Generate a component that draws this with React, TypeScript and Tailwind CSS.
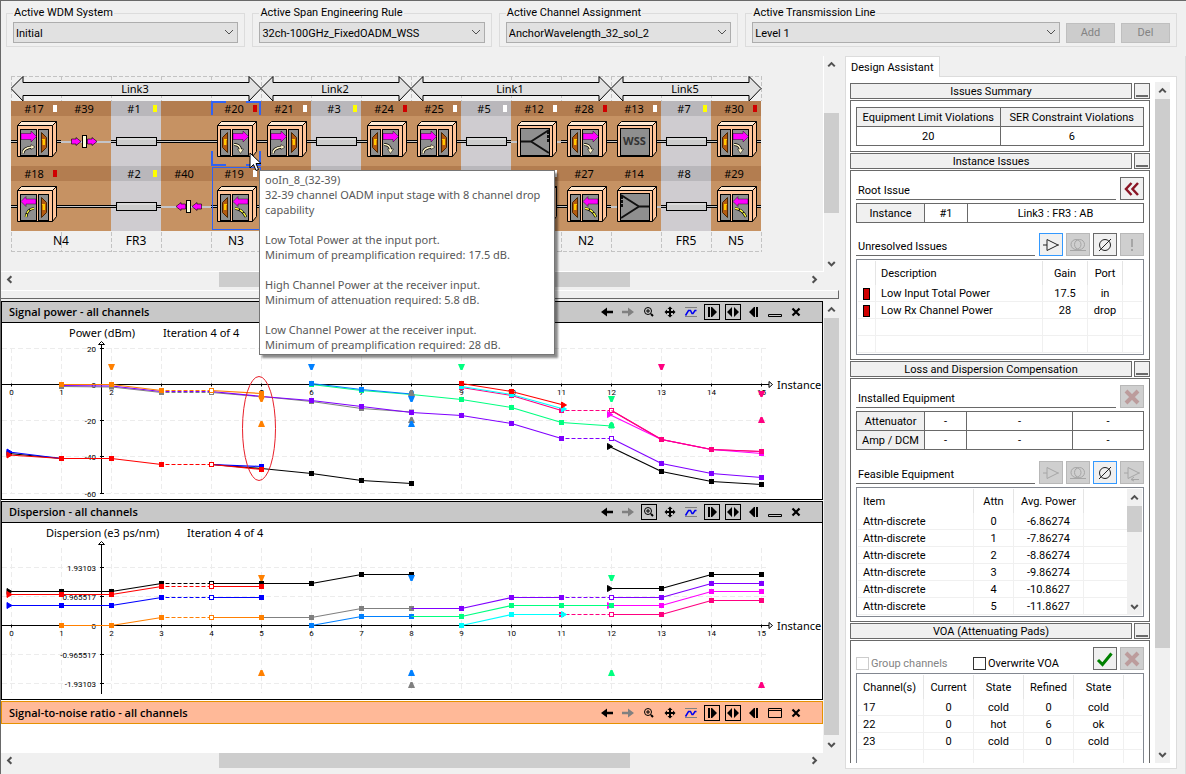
import { FC, ReactNode } from 'react';

type Tone = 'brown' | 'gray';
type DeviceKind = 'out' | 'in' | 'fiber' | 'coupler' | 'wss' | 'joint' | 'wire';

interface Cell {
  label?: string;
  flag?: string;
  kind: DeviceKind;
}

const WHITE = '#ffffff';
const RED = '#d00000';
const YELLOW = '#ffff00';
const COL = 50;

const tones: Tone[] = [
  'brown', 'brown', 'gray', 'brown', 'brown', 'brown', 'gray', 'brown',
  'brown', 'gray', 'brown', 'brown', 'brown', 'gray', 'brown',
];

const topRow: Cell[] = [
  { label: '#17', flag: WHITE, kind: 'out' },
  { label: '#39', kind: 'joint' },
  { label: '#1', flag: YELLOW, kind: 'fiber' },
  { kind: 'wire' },
  { label: '#20', flag: RED, kind: 'in' },
  { label: '#21', flag: WHITE, kind: 'out' },
  { label: '#3', flag: YELLOW, kind: 'fiber' },
  { label: '#24', flag: RED, kind: 'in' },
  { label: '#25', flag: WHITE, kind: 'out' },
  { label: '#5', flag: WHITE, kind: 'fiber' },
  { label: '#12', flag: WHITE, kind: 'coupler' },
  { label: '#28', flag: RED, kind: 'in' },
  { label: '#13', flag: WHITE, kind: 'wss' },
  { label: '#7', flag: YELLOW, kind: 'fiber' },
  { label: '#30', flag: RED, kind: 'in' },
];

const bottomRow: Cell[] = [
  { label: '#18', flag: RED, kind: 'out' },
  { kind: 'wire' },
  { label: '#2', flag: YELLOW, kind: 'fiber' },
  { label: '#40', kind: 'joint' },
  { label: '#19', flag: WHITE, kind: 'in' },
  { kind: 'out' },
  { kind: 'fiber' },
  { kind: 'in' },
  { kind: 'out' },
  { kind: 'fiber' },
  { flag: WHITE, kind: 'out' },
  { label: '#27', kind: 'in' },
  { label: '#14', kind: 'coupler' },
  { label: '#8', kind: 'fiber' },
  { label: '#29', kind: 'in' },
];

const links = [
  { name: 'Link3', from: 0, to: 5 },
  { name: 'Link2', from: 5, to: 8 },
  { name: 'Link1', from: 8, to: 12 },
  { name: 'Link5', from: 12, to: 15 },
];

const sites = [
  { name: 'N4', at: 50 },
  { name: 'FR3', at: 125 },
  { name: 'N3', at: 225 },
  { name: 'N2', at: 575 },
  { name: 'FR5', at: 675 },
  { name: 'N5', at: 725 },
];

const Wire: FC<{ x1: number; x2: number; light?: boolean }> = ({ x1, x2, light }): ReactNode => (
  <g shapeRendering="crispEdges">
    {light ? (
      <rect x={x1} y="40" width={x2 - x1} height="2" fill="#c4c4c8" />
    ) : (
      <>
        <rect x={x1} y="39" width={x2 - x1} height="3" fill="#000" />
        <rect x={x1} y="40" width={x2 - x1} height="1" fill="#c8c8c8" />
      </>
    )}
  </g>
);

const Cabinet: FC = (): ReactNode => (
  <g stroke="#000" strokeLinejoin="round">
    <path d="M6.500 24.500L10.500 20.500H45.500L41.500 24.500Z" fill="#ffe9d2" />
    <path d="M41.500 24.500L45.500 20.500V50.500L41.500 55.500Z" fill="#ffc499" />
    <rect x="6.500" y="24.500" width="35" height="31" fill="#ffc499" />
  </g>
);

const Door: FC<{ x: number; flip?: boolean }> = ({ x, flip }): ReactNode => (
  <g transform={flip ? `translate(${x + 11} 0) scale(-1 1)` : `translate(${x} 0)`}>
    <rect x="0.500" y="28.500" width="10" height="26" fill="#8f8f8f" stroke="#000" />
    <path d="M3.500 31.500L8.500 36.500V46.500L3.500 51.500Z" fill="#b35a10" stroke="#4a2400" />
    <rect x="4" y="38" width="3" height="6" fill="#ffc800" />
    <path d="M4.500 39V44" stroke="#e08000" />
  </g>
);

const Chamber: FC<{ x: number; left?: boolean; down?: boolean }> = ({ x, left, down }): ReactNode => (
  <g transform={`translate(${x} 0)`}>
    <rect x="0.500" y="28.500" width="16" height="26" fill="#8f8f8f" stroke="#000" />
    <path
      d={
        left
          ? 'M1 35.500L6 30.500V33H16V38H6V40.500Z'
          : 'M1 32.500H11V30L16.500 35.500L11 41V38.500H1Z'
      }
      fill="#ff00ff"
      stroke="#000"
      strokeWidth="0.4"
    />
    {left ? (
      <g fill="none">
        <path d={down ? 'M3 42.500Q10 43 14 51' : 'M14 42.500Q7 43 6 51'} stroke="#000" strokeWidth="2.6" />
        <path
          d={down ? 'M3 42.500Q10 43 14 51' : 'M14 42.500Q7 43 6 51'}
          stroke="#ffff40"
          strokeWidth="1.4"
          strokeDasharray="4 1"
        />
      </g>
    ) : (
      <g fill="none">
        <path d={down ? 'M2 43.500Q8 43.500 8.500 49' : 'M3 52.500Q3 47 12 46'} stroke="#000" strokeWidth="2.800" />
        <path d={down ? 'M5.500 48L8.500 52.500L11.500 48Z' : 'M11 43.500L15 46L11 48.500Z'} fill="#fff6c8" stroke="#000" strokeWidth="0.5" />
        <path d={down ? 'M2 43.500Q8 43.500 8.500 49' : 'M3 52.500Q3 47 12 46'} stroke="#fff6c8" strokeWidth="1.5" />
      </g>
    )}
  </g>
);

const Device: FC<{ kind: DeviceKind; reverse: boolean }> = ({ kind, reverse }): ReactNode => {
  if (kind === 'wire') return <Wire x1={0} x2={50} />;
  if (kind === 'fiber') {
    return (
      <>
        <Wire x1={0} x2={50} />
        <rect x="5.500" y="36.500" width="40" height="8" fill="#cccccc" stroke="#000" />
        <path d="M7 38H45" stroke="#e8e8e8" />
      </>
    );
  }
  if (kind === 'joint') {
    return (
      <>
        <Wire x1={0} x2={50} light />
        <g transform={reverse ? 'translate(52 0) scale(-1 1)' : 'translate(-1 0)'} stroke="#000" strokeWidth="0.600">
          <path d="M11.500 38H16V36.500L21 40.500L16 44.500V43H11.500Z" fill="#ff00ff" />
          <path d="M27.500 38H32V36.500L37 40.500L32 44.500V43H27.500Z" fill="#ff00ff" />
          <rect x="22.500" y="34.500" width="4" height="12" fill="#ffffe0" strokeWidth="1" />
        </g>
      </>
    );
  }
  if (kind === 'coupler' || kind === 'wss') {
    return (
      <>
        <Wire x1={0} x2={50} light={kind === 'coupler'} />
        <Cabinet />
        <rect x="9.500" y="27.500" width="29" height="27" fill="#8f8f8f" stroke="#000" />
        {kind === 'wss' ? (
          <text x="23.500" y="44" textAnchor="middle" fontSize="11" fontWeight="700" fill="#333">
            WSS
          </text>
        ) : (
          <g transform={reverse ? 'translate(48 0) scale(-1 1)' : undefined}>
            <path d="M10 40.500H20M20 40.500L38 29M20 40.500L38 52" stroke="#111" strokeWidth="2" fill="none" />
            <path d="M37 30V42" stroke="#111" strokeWidth="2" strokeDasharray="3 1" />
          </g>
        )}
      </>
    );
  }
  return (
    <>
      <Wire x1={0} x2={50} />
      <Cabinet />
      {kind === 'out' ? (
        <>
          <Chamber x={9} left={reverse} />
          <Door x={27} />
        </>
      ) : (
        <>
          <Door x={9} flip />
          <Chamber x={21} left={reverse} down />
        </>
      )}
    </>
  );
};

const NetworkRow: FC<{ cells: Cell[]; y: number; reverse: boolean }> = ({ cells, y, reverse }): ReactNode => (
  <g transform={`translate(0 ${y})`}>
    {cells.map((cell, i) => (
      <g key={i} transform={`translate(${i * COL} 0)`}>
        <rect width="50" height="15" fill={tones[i] === 'brown' ? '#b37d50' : '#b9b7bb'} />
        <rect y="15" width="50" height="50" fill={tones[i] === 'brown' ? '#c69263' : '#cfccd0'} />
        {cell.label && (
          <text x="23" y="12" textAnchor="middle" fontSize="11">
            {cell.label}
          </text>
        )}
        {cell.flag && <rect x="42" y="4" width="4" height="7" fill={cell.flag} />}
      </g>
    ))}
    {cells.map((cell, i) => (
      <g key={i} transform={`translate(${i * COL} 0)`}>
        <Device kind={cell.kind} reverse={reverse} />
      </g>
    ))}
  </g>
);

const NetworkDiagram: FC = (): ReactNode => (
  <svg width="752" height="178" className="shrink-0 font-['Noto_Sans','Segoe_UI',sans-serif]">
    <g stroke="#c3c3c3" strokeDasharray="4 2">
      <path d="M0 0.500H750M0 175.500H750" />
      {Array.from({ length: 16 }, (_, i) => (
        <path key={i} d={`M${i * COL + 0.5} 0V25M${i * COL + 0.5} 156V176`} />
      ))}
    </g>
    {links.map(({ name, from, to }) => {
      const a = from * COL;
      const b = to * COL;
      return (
        <g key={name}>
          <path
            d={`M${a} 12.500L${a + 12} 0.500V6.500H${b - 12}V0.500L${b} 12.500L${b - 12} 25V19.500H${a + 12}V25Z`}
            fill="#e1e1e1"
            stroke="#000"
          />
          <text x={(a + b) / 2 - 1} y="17" textAnchor="middle" fontSize="11">
            {name}
          </text>
        </g>
      );
    })}
    <NetworkRow cells={topRow} y={25} reverse={false} />
    <NetworkRow cells={bottomRow} y={90} reverse />
    {sites.map(({ name, at }) => (
      <text key={name} x={at} y="169" textAnchor="middle" fontSize="12">
        {name}
      </text>
    ))}
    <path
      d="M201 39V26H215M235 26H249V39M201 75V89H215M235 89H249V75"
      fill="none"
      stroke="#2f62f5"
      strokeWidth="2"
    />
    <rect x="201.500" y="91.500" width="48" height="62" fill="none" stroke="#2f62f5" />
  </svg>
);

type Point = [number, number];

interface Series {
  color: string;
  points: Point[];
  // the series begins or ends with an arrow head rather than a square
  start?: boolean;
  end?: boolean;
  noMarks?: number[];
}

interface Limit {
  color: string;
  at: Point;
  up?: boolean;
}

interface ChartProps {
  title: string;
  titleX: number;
  iterationX: number;
  zero: number;
  gridTop: number;
  ticks: { label: string; y: number }[];
  series: Series[];
  limits: Limit[];
  children?: ReactNode;
}

const BLACK = '#000000';
const PURPLE = '#8000ff';
const GRAY = '#808080';
const ORANGE = '#ff8000';
const AZURE = '#0080ff';
const GREEN = '#00ff80';
const CYAN = '#00ffff';
const PINK = '#ff0080';
const MAGENTA = '#ff00ff';

const px = (i: number): number => 9.5 + i * COL;

const ChartLine: FC<{ series: Series }> = ({ series }): ReactNode => {
  const { color, points, start, end, noMarks = [] } = series;
  return (
    <g stroke={color} fill={color}>
      {points.slice(1).map(([i, y], n) => {
        const [pi, py] = points[n];
        const skipped = (pi === 3 && i === 4) || (pi === 11 && i === 12 && color !== GREEN);
        return (
          <path
            key={i}
            d={`M${px(pi)} ${py}L${px(i)} ${y}`}
            strokeWidth="1.2"
            strokeDasharray={skipped ? '4 2' : undefined}
            strokeDashoffset={skipped ? 2 : undefined}
          />
        );
      })}
      {points.map(([i, y], n) => {
        const x = px(i);
        if (noMarks.includes(i)) return null;
        if ((n === 0 && start) || (n === points.length - 1 && end)) {
          return <path key={i} d={`M${x - 2} ${y - 3}L${x + 3} ${y}L${x - 2} ${y + 3}Z`} />;
        }
        const open = i === 4 || (i === 12 && color !== GREEN);
        return open ? (
          <rect key={i} x={x - 2} y={y - 2} width="4" height="4" fill="#fff" />
        ) : (
          <rect key={i} x={x - 2.5} y={y - 2.5} width="5" height="5" stroke="none" />
        );
      })}
    </g>
  );
};

const Chart: FC<ChartProps> = ({
  title, titleX, iterationX, zero, gridTop, ticks, series, limits, children,
}): ReactNode => (
  <svg width="820" height="176" className="block font-['Noto_Sans','Segoe_UI',sans-serif]">
    <g stroke="#ececec" strokeDasharray="5 3">
      {ticks.filter((t) => t.y !== zero).map((t) => (
        <path key={t.label} d={`M0 ${t.y}H764`} />
      ))}
      {Array.from({ length: 16 }, (_, i) => (
        <path key={i} d={`M${px(i)} ${gridTop}V170`} />
      ))}
    </g>
    <g stroke="#000" fill="none">
      <path d={`M0 ${zero}H767M99.500 21V171`} />
      <path d={`M767 ${zero - 3}V${zero + 3}L770.500 ${zero}ZM96.500 21.500H102.500L99.500 18.500Z`} fill="#fff" />
      {ticks.map((t) => (
        <path key={t.label} d={`M98 ${t.y}H102`} />
      ))}
      {Array.from({ length: 16 }, (_, i) => (
        <path key={i} d={`M${px(i)} ${zero - 1}V${zero + 2}`} />
      ))}
    </g>
    <g className="font-[Roboto,Tahoma,sans-serif]" fontSize="8">
      {Array.from({ length: 16 }, (_, i) => (
        <text key={i} x={px(i)} y={zero + 10} textAnchor="middle">
          {i}
        </text>
      ))}
      {ticks.map((t) => (
        <text key={t.label} x="94" y={t.y + 3} textAnchor="end">
          {t.label}
        </text>
      ))}
    </g>
    <g fontSize="11">
      <text x={titleX} y="14">{title}</text>
      <text x={iterationX} y="14">Iteration 4 of 4</text>
      <text x="775" y={zero + 4}>Instance</text>
    </g>
    {series.map((s, n) => (
      <ChartLine key={n} series={s} />
    ))}
    {limits.map(({ color, at: [i, y], up }, n) => (
      <path
        key={n}
        fill={color}
        d={
          up
            ? `M${px(i) - 3.5} ${y + 3}H${px(i) + 3.5}L${px(i) + 1} ${y - 3}H${px(i) - 1}Z`
            : `M${px(i) - 3.5} ${y - 3}H${px(i) + 3.5}L${px(i) + 1} ${y + 3}H${px(i) - 1}Z`
        }
      />
    ))}
    {children}
  </svg>
);

const powerTicks = [
  { label: '20', y: 25.5 },
  { label: '0', y: 61.5 },
  { label: '-20', y: 97.5 },
  { label: '-40', y: 133.5 },
  { label: '-60', y: 170.5 },
];

const powerSeries: Series[] = [
  { color: GRAY, points: [[1, 63.5], [2, 64], [3, 69.5], [4, 69.5], [5, 73.5], [6, 78.5], [7, 85.5], [8, 89]] },
  {
    color: PURPLE,
    noMarks: [1, 2, 3, 4, 5],
    points: [
      [1, 62.5], [2, 63], [3, 68.5], [4, 68.5], [5, 73.5], [6, 77.5], [7, 83.5], [8, 89.5],
      [9, 92.5], [10, 100.5], [11, 115.5], [12, 115.5], [13, 140.5], [14, 150.5], [15, 154.5],
    ],
  },
  { color: ORANGE, points: [[1, 61.5], [2, 61.5], [3, 67.5], [4, 67.5], [5, 70.5]] },
  { color: BLACK, start: true, noMarks: [1, 4, 5], points: [[-0.05, 130.5], [1, 135.5]] },
  { color: BLACK, noMarks: [4, 5], points: [[4, 141.5], [5, 145.5], [6, 150.5], [7, 157.5], [8, 160.5]] },
  { color: '#0000ff', start: true, points: [[-0.05, 129], [1, 135.5]] },
  { color: '#0000ff', points: [[4, 141.5], [5, 143.5]] },
  { color: '#ff0000', start: true, points: [[-0.05, 132], [1, 135.5], [2, 135.5], [3, 141.5], [4, 141.5], [5, 146.5]] },
  { color: GREEN, points: [[6, 61.5], [7, 67.5], [8, 71.5], [9, 76.5], [10, 84.5], [11, 99.5], [12, 103]] },
  { color: AZURE, points: [[6, 60.5], [7, 66.5], [8, 71]] },
  {
    color: PINK,
    points: [[9, 64.5], [10, 72.5], [11, 87.5], [12, 87.5], [13, 116.5], [14, 126.5], [15, 128.5]],
  },
  { color: CYAN, end: true, points: [[9, 63.5], [10, 71.5], [11.04, 86]] },
  { color: '#ff0000', end: true, points: [[9, 60.5], [10, 68.5], [11.04, 82]] },
  { color: MAGENTA, start: true, points: [[11.96, 91.5], [13, 116.5], [14, 126.5], [15, 130.5]] },
  { color: PINK, noMarks: [12], points: [[12, 87.5], [13, 116.5], [14, 126.5], [15, 128.5]] },
  { color: BLACK, start: true, points: [[11.96, 123.5], [13, 148.5], [14, 158.5], [15, 161.5]] },
];

const powerLimits: Limit[] = [
  { color: ORANGE, at: [2, 44] },
  { color: ORANGE, at: [5, 76] },
  { color: ORANGE, at: [5, 101], up: true },
  { color: AZURE, at: [6, 44] },
  { color: GRAY, at: [8, 70], up: true },
  { color: AZURE, at: [8, 76] },
  { color: GRAY, at: [8, 97], up: true },
  { color: AZURE, at: [8, 101], up: true },
  { color: GREEN, at: [9, 44] },
  { color: GREEN, at: [12, 76] },
  { color: GREEN, at: [12, 102], up: true },
  { color: PINK, at: [13, 44] },
  { color: PINK, at: [15, 71] },
  { color: PINK, at: [15, 97], up: true },
];

const dispersionTicks = [
  { label: '1.93103', y: 44.5 },
  { label: '0.965517', y: 73.5 },
  { label: '0', y: 102.5 },
  { label: '-0.965517', y: 131.5 },
  { label: '-1.93103', y: 160.5 },
];

const dispersionSeries: Series[] = [
  {
    color: BLACK,
    start: true,
    points: [
      [-0.05, 68.5], [1, 68.5], [2, 68.5], [3, 60.5], [4, 60.5], [5, 60.5], [6, 60.5], [7, 51.5], [8, 51.5],
    ],
  },
  { color: '#ff0000', start: true, points: [[-0.05, 71.5], [1, 71.5], [2, 71.5], [3, 63.5], [4, 63.5], [5, 63.5]] },
  { color: '#0000ff', start: true, points: [[-0.05, 82.5], [1, 82.5], [2, 82.5], [3, 74.5], [4, 74.5], [5, 74.5]] },
  { color: GRAY, points: [[5, 94.5], [6, 94.5], [7, 85.5], [8, 85.5]] },
  { color: ORANGE, points: [[1, 102.5], [2, 102.5], [3, 94.5], [4, 94.5], [5, 94.5]] },
  { color: AZURE, points: [[6, 102.5], [7, 93.5], [8, 93.5]] },
  {
    color: PURPLE,
    noMarks: [8],
    points: [[8, 85.5], [9, 85.5], [10, 74.5], [11, 74.5], [12, 74.5], [13, 74.5], [14, 60.5], [15, 60.5]],
  },
  { color: MAGENTA, start: true, points: [[11.96, 82.5], [13, 82.5], [14, 68.5], [15, 68.5]] },
  { color: GREEN, noMarks: [8], points: [[8, 93.5], [9, 93.5], [10, 82.5], [11, 82.5], [12, 82.5]] },
  { color: PINK, points: [[11, 91.5], [12, 91.5], [13, 91.5], [14, 77.5], [15, 77.5]] },
  { color: CYAN, end: true, points: [[9, 102.5], [10, 91.5], [11.04, 91.5]] },
  { color: BLACK, start: true, points: [[11.96, 65.5], [13, 65.5], [14, 51.5], [15, 51.5]] },
];

const dispersionLimits: Limit[] = [
  { color: ORANGE, at: [5, 55] },
  { color: ORANGE, at: [5, 150], up: true },
  { color: AZURE, at: [8, 55] },
  { color: AZURE, at: [8, 150], up: true },
  { color: GRAY, at: [8, 162], up: true },
  { color: GREEN, at: [12, 55] },
  { color: GREEN, at: [12, 150], up: true },
  { color: PINK, at: [15, 162], up: true },
];

const toolIcons: { name: string; art: ReactNode }[] = [
  { name: 'Back', art: <path d="M8 3.500L2 8L8 12.500V9.200H14V6.800H8Z" /> },
  { name: 'Forward', art: <path d="M8 3.500L14 8L8 12.500V9.200H2V6.800H8Z" fill="#808080" /> },
  {
    name: 'Zoom',
    art: (
      <>
        <circle cx="7" cy="7" r="3.500" fill="none" stroke="#000" />
        <path d="M5 7H9M7 5V9M9.500 9.500L12 12" stroke="#000" />
        <path d="M10 10L12 12" stroke="#000" strokeWidth="2" />
      </>
    ),
  },
  {
    name: 'Pan',
    art: (
      <path d="M8 2.500L10.500 5H9V7H11V5.500L13.500 8L11 10.500V9H9V11H10.500L8 13.500L5.500 11H7V9H5V10.500L2.500 8L5 5.500V7H7V5H5.500Z" />
    ),
  },
  {
    name: 'Curves',
    art: (
      <>
        <path d="M2 3.500H14M2 12.500H14" stroke="#808080" />
        <path d="M2.500 11.500L5.500 6.500H7.500L9 9.500H10L12 6.500H13.500" stroke="#0000f0" strokeWidth="1.500" fill="none" />
      </>
    ),
  },
  { name: 'Expand right', art: <path d="M4 3H6V13H4ZM7 3H8L13 8L8 13H7Z" /> },
  { name: 'Expand both', art: <path d="M7 3V13L2 8ZM9 3V13L14 8Z" /> },
  { name: 'Collapse left', art: <path d="M10 3H12V13H10ZM9 3V13H8L3 8L8 3Z" /> },
];

const ChartPanel: FC<{ title: string; zoomed?: boolean; collapsed?: boolean; children?: ReactNode }> = ({
  title, zoomed, collapsed, children,
}): ReactNode => (
  <section className={`overflow-hidden border ${collapsed ? 'border-[#e69100]' : 'border-black'} bg-white`}>
    <header
      className={`flex h-[21px] items-center justify-between pr-[18px] pl-[7px] ${
        collapsed ? 'bg-[#ffb998]' : 'border-b border-black bg-[#c8c8c8]'
      }`}
    >
      <h2 className="font-['Open_Sans','Segoe_UI',sans-serif] text-[11px] leading-4 font-semibold">{title}</h2>
      <div className="flex gap-[5px]">
        {toolIcons.map(({ name, art }) => (
          <button
            key={name}
            type="button"
            aria-label={name}
            className={`size-4 ${
              name.startsWith('Expand') || (zoomed && name === 'Zoom') ? 'outline-1 -outline-offset-1 outline-black' : ''
            }`}
          >
            <svg viewBox="0 0 16 16" className="size-4">{art}</svg>
          </button>
        ))}
        <button type="button" aria-label={collapsed ? 'Restore' : 'Minimize'} className="size-4">
          <svg viewBox="0 0 16 16" className="size-4" fill="none" stroke="#000">
            {collapsed ? <path d="M1.500 3.500H14.500V12.500H1.500ZM2 5.500H14" /> : <path d="M1.500 10.500H14.500V12.500H1.500Z" />}
          </svg>
        </button>
        <button type="button" aria-label="Close" className="size-4">
          <svg viewBox="0 0 16 16" className="size-4">
            <path d="M4.500 4.500L11.500 11.500M11.500 4.500L4.500 11.500" stroke="#000" strokeWidth="2.200" />
          </svg>
        </button>
      </div>
    </header>
    {children}
  </section>
);

const arrowPaths = {
  up: 'M4.500 10L8 6.500L11.500 10',
  down: 'M4.500 6.500L8 10L11.500 6.500',
  left: 'M10 4.500L6.500 8L10 11.500',
  right: 'M6 4.500L9.500 8L6 11.500',
};

const ScrollButton: FC<{ dir: keyof typeof arrowPaths }> = ({ dir }): ReactNode => (
  <button
    type="button"
    aria-label={`Scroll ${dir}`}
    className={`flex shrink-0 items-center justify-center ${
      dir === 'up' || dir === 'down' ? 'h-[17px] w-[15px]' : 'h-[15px] w-[17px]'
    }`}
  >
    <svg viewBox="0 0 16 16" className="size-[15px]">
      <path d={arrowPaths[dir]} fill="none" stroke="#505050" strokeWidth="2.200" />
    </svg>
  </button>
);

// before and after are the flex weights of the track on each side of the thumb
const Scrollbar: FC<{ vertical?: boolean; before: number; thumb: number; after: number }> = ({
  vertical, before, thumb, after,
}): ReactNode => (
  <div className={`flex shrink-0 bg-[#f0f0f0] ${vertical ? 'w-[15px] flex-col' : 'h-[15px]'}`}>
    <ScrollButton dir={vertical ? 'up' : 'left'} />
    <div style={{ flexGrow: before }} />
    <div className="bg-[#cdcdcd]" style={{ flexGrow: thumb }} />
    <div style={{ flexGrow: after }} />
    <ScrollButton dir={vertical ? 'down' : 'right'} />
  </div>
);

const Picker: FC<{ id: string; label: string; value: string; children?: ReactNode }> = ({
  id, label, value, children,
}): ReactNode => (
  <fieldset className="min-w-0 border border-[#dcdcdc] px-1.5 pt-0.5 pb-[3px]">
    <legend className="px-px leading-[14px]">
      <label htmlFor={id}>{label}</label>
    </legend>
    <div className="flex items-center gap-1.5">
      <div className="relative min-w-0 flex-1">
        <select
          id={id}
          className="h-[21px] w-full appearance-none border border-[#adadad] bg-[#e1e1e1] pt-px pr-5 pl-0.5"
        >
          <option>{value}</option>
        </select>
        <svg viewBox="0 0 16 16" className="pointer-events-none absolute top-0.5 right-px size-4">
          <path d="M4 6L8 10L12 6" fill="none" stroke="#505050" />
        </svg>
      </div>
      {children}
    </div>
  </fieldset>
);

const Tooltip: FC = (): ReactNode => (
  <div
    role="tooltip"
    className="absolute top-[169px] left-[258px] z-10 w-[296px] border border-[#767676] bg-white px-[5px] pt-px pb-0.5 font-['Noto_Sans','Segoe_UI',sans-serif] text-[11px] leading-[15px] text-[#575757] shadow-[3px_3px_2px_rgba(0,0,0,0.45)]"
  >
    <p>ooIn_8_(32-39)</p>
    <p>32-39 channel OADM input stage with 8 channel drop capability</p>
    <p className="mt-[15px]">Low Total Power at the input port.</p>
    <p>Minimum of preamplification required: 17.5 dB.</p>
    <p className="mt-[15px]">High Channel Power at the receiver input.</p>
    <p>Minimum of attenuation required: 5.8 dB.</p>
    <p className="mt-[15px]">Low Channel Power at the receiver input.</p>
    <p>Minimum of preamplification required: 28 dB.</p>
  </div>
);

const Section: FC<{ title: string; children: ReactNode }> = ({ title, children }): ReactNode => (
  <section className="mb-px">
    <header className="mb-px flex gap-0.5">
      <h2 className="h-4 flex-1 border border-[#696969] bg-[#f0f0f0] text-center leading-4">{title}</h2>
      <button
        type="button"
        aria-label={`Minimize ${title}`}
        className="flex h-4 w-4 items-end border border-[#696969] bg-[#f0f0f0] p-px"
      >
        <span className="h-0.5 w-full bg-[#696969]" />
      </button>
    </header>
    <div className="border border-[#696969] px-[5px] pt-1.5 pb-1">{children}</div>
  </section>
);

const equipArt = {
  amp: <path d="M4 11H8M8 5.500V16.500L19 11ZM19 11H20" />,
  coil: (
    <>
      <circle cx="10" cy="10.500" r="5" />
      <circle cx="13.500" cy="10.500" r="5" />
      <path d="M4 16.500H20" />
    </>
  ),
  none: (
    <>
      <circle cx="12" cy="11" r="5.500" />
      <path d="M6 17L18 5" />
    </>
  ),
  alert: <path d="M12 5V13M12 15V17" strokeWidth="2" />,
  ampLoop: <path d="M4 11H8M8 5.500V16.500L19 11ZM19 11H20M11 17.500H19M14 15L11 17.500L14 19" />,
  cross: <path d="M6 5L18 17M18 5L6 17" stroke="#bc9c9c" strokeWidth="4" />,
  check: <path d="M5 12L9.500 16.500L18.500 5.500" stroke="#008000" strokeWidth="3" />,
  back: <path d="M11.500 5L6 11L11.500 17M18 5L12.500 11L18 17" stroke="#8b1525" strokeWidth="2.500" />,
};

const EquipButton: FC<{ art: keyof typeof equipArt; name: string; active?: boolean; disabled?: boolean }> = ({
  art, name, active, disabled,
}): ReactNode => (
  <button
    type="button"
    aria-label={name}
    disabled={disabled}
    className={`h-[23px] w-6 border ${
      disabled ? 'border-[#b8b8b8] bg-[#cfcfcf]' : active ? 'border-[#3399ff] bg-[#f0f0f0]' : 'border-[#696969] bg-[#f0f0f0]'
    }`}
  >
    <svg viewBox="1 0 22 21" className="block h-[21px] w-[22px]" fill="none" stroke={disabled ? '#a6a6a6' : '#222'}>
      {equipArt[art]}
    </svg>
  </button>
);

const Caption: FC<{ title: string; children: ReactNode }> = ({ title, children }): ReactNode => (
  <div className="flex gap-1">
    <h3 className="flex flex-1 items-end border-b border-[#696969] pb-px pl-0.5 leading-[14px]">{title}</h3>
    <div className="flex gap-[3px]">{children}</div>
  </div>
);

const GridTable: FC<{ widths: string[]; head?: string[]; rows: string[][]; headed?: boolean }> = ({
  widths, head, rows, headed,
}): ReactNode => (
  <table className="w-full table-fixed border-collapse text-center leading-4">
    <colgroup>
      {widths.map((w, i) => (
        <col key={i} className={w} />
      ))}
    </colgroup>
    {head && (
      <thead>
        <tr>
          {head.map((h) => (
            <th
              key={h}
              scope="col"
              className="h-[19px] border border-[#696969] bg-[#f0f0f0] pt-px font-normal whitespace-nowrap"
            >
              {h}
            </th>
          ))}
        </tr>
      </thead>
    )}
    <tbody>
      {rows.map((row) => (
        <tr key={row[0]}>
          {row.map((value, i) =>
            headed && i === 0 ? (
              <th key={i} scope="row" className="h-[19px] border border-[#696969] bg-[#f0f0f0] pt-px font-normal">
                {value}
              </th>
            ) : (
              <td key={i} className="h-[19px] border border-[#696969] pt-px">
                {value}
              </td>
            ),
          )}
        </tr>
      ))}
    </tbody>
  </table>
);

const ListTable: FC<{ widths: string[]; head: string[]; rows: ReactNode[][]; leftCols: number[] }> = ({
  widths, head, rows, leftCols,
}): ReactNode => (
  <table className="w-full flex-1 table-fixed border-separate border-spacing-0 text-center leading-[15px]">
    <colgroup>
      {widths.map((w, i) => (
        <col key={i} className={w} />
      ))}
    </colgroup>
    <thead>
      <tr>
        {head.map((h, i) => (
          <th
            key={i}
            scope="col"
            className={`h-6 border-[#e5e5e5] font-normal whitespace-nowrap ${i < head.length - 1 ? 'border-r' : ''} ${
              leftCols.includes(i) ? 'pl-[5px] text-left' : ''
            }`}
          >
            {h}
          </th>
        ))}
      </tr>
    </thead>
    <tbody>
      {rows.map((row, r) => (
        <tr key={r}>
          {row.map((value, i) => (
            <td
              key={i}
              className={`h-[17px] border-b border-[#f0f0f0] pt-px ${i < row.length - 1 ? 'border-r' : ''} ${
                leftCols.includes(i) ? 'pl-[5px] text-left' : ''
              }`}
            >
              {value}
            </td>
          ))}
        </tr>
      ))}
    </tbody>
  </table>
);

const mark = <span className="mx-auto block h-3 w-[7px] border border-black bg-[#d00000]" />;

const attenuators = ['-6.86274', '-7.86274', '-8.86274', '-9.86274', '-10.8627', '-11.8627'];

const DesignAssistant: FC = (): ReactNode => (
  <aside className="flex w-[347px] shrink-0 flex-col border-r border-[#dcdcdc] pr-2 pb-[5px] pl-1.5">
    <div role="tablist" className="relative -mb-px flex">
      <button
        type="button"
        role="tab"
        aria-selected="true"
        className="h-[21px] border border-b-0 border-[#dcdcdc] bg-white px-[5px]"
      >
        Design Assistant
      </button>
    </div>
    <div className="flex min-h-0 flex-1 gap-[5px] border border-[#dcdcdc] bg-white py-[5px] pr-1.5 pl-1">
      <div className="min-w-0 flex-1 overflow-hidden pt-px">
        <Section title="Issues Summary">
          <div className="pb-px">
            <GridTable
              widths={['w-1/2', 'w-1/2']}
              head={['Equipment Limit Violations', 'SER Constraint Violations']}
              rows={[['20', '6']]}
            />
          </div>
        </Section>
        <Section title="Instance Issues">
          <Caption title="Root Issue">
            <EquipButton art="back" name="Previous issue" />
          </Caption>
          <div className="mt-[3px] mb-2.5">
            <GridTable
              headed
              widths={['w-[68px]', 'w-[43px]', '']}
              rows={[['Instance', '#1', 'Link3 : FR3 : AB']]}
            />
          </div>
          <Caption title="Unresolved Issues">
            <EquipButton art="amp" name="Amplifier" active />
            <EquipButton art="coil" name="Dispersion module" disabled />
            <EquipButton art="none" name="Attenuator" />
            <EquipButton art="alert" name="Alert" disabled />
          </Caption>
          <div className="mt-[3px] border border-[#828790] p-px">
            <ListTable
              leftCols={[1]}
              widths={['w-[18px]', '', 'w-[45px]', 'w-[35px]', 'w-[19px]']}
              head={['', 'Description', 'Gain', 'Port', '']}
              rows={[
                [mark, 'Low Input Total Power', '17.5', 'in', ''],
                [mark, 'Low Rx Channel Power', '28', 'drop', ''],
                ['', '', '', '', ''],
                ['', '', '', '', ''],
              ]}
            />
          </div>
        </Section>
        <Section title="Loss and Dispersion Compensation">
          <Caption title="Installed Equipment">
            <EquipButton art="cross" name="Remove equipment" disabled />
          </Caption>
          <div className="mt-[3px] mb-[11px]">
            <GridTable
              headed
              widths={['w-[68px]', 'w-[42px]', '', 'w-[71px]']}
              rows={[
                ['Attenuator', '-', '-', '-'],
                ['Amp / DCM', '-', '-', '-'],
              ]}
            />
          </div>
          <Caption title="Feasible Equipment">
            <EquipButton art="amp" name="Feasible amplifiers" disabled />
            <EquipButton art="coil" name="Feasible dispersion modules" disabled />
            <EquipButton art="none" name="Feasible attenuators" active />
            <EquipButton art="ampLoop" name="Replace amplifier" disabled />
          </Caption>
          <div className="mt-[3px] flex border border-[#828790] p-px">
            <ListTable
              leftCols={[0]}
              widths={['w-[116px]', 'w-10', 'w-[70px]', '']}
              head={['Item', 'Attn', 'Avg. Power', '']}
              rows={attenuators.map((power, i) => ['Attn-discrete', String(i), power, ''])}
            />
            <Scrollbar vertical before={0} thumb={26} after={66} />
          </div>
        </Section>
        <Section title="VOA (Attenuating Pads)">
          <div className="flex items-end gap-[3px] leading-[13px]">
            <label className="flex w-[114px] items-center gap-0.5 whitespace-nowrap text-[#838383]">
              <input type="checkbox" disabled className="size-[13px] appearance-none border border-[#cccccc] bg-white" />
              Group channels
            </label>
            <label className="flex flex-1 items-center gap-0.5 whitespace-nowrap">
              <input type="checkbox" className="size-[13px] appearance-none border border-[#333333] bg-white" />
              Overwrite VOA
            </label>
            <EquipButton art="check" name="Apply" />
            <EquipButton art="cross" name="Cancel" disabled />
          </div>
          <div className="mt-[3px] border border-[#828790] p-px">
            <ListTable
              leftCols={[0]}
              widths={['w-[66px]', 'w-[50px]', 'w-[50px]', 'w-[50px]', 'w-[50px]', '']}
              head={['Channel(s)', 'Current', 'State', 'Refined', 'State', '']}
              rows={[
                ['17', '0', 'cold', '0', 'cold', ''],
                ['22', '0', 'hot', '6', 'ok', ''],
                ['23', '0', 'cold', '0', 'cold', ''],
                ['', '', '', '', '', ''],
                ['', '', '', '', '', ''],
              ]}
            />
          </div>
        </Section>
      </div>
      <Scrollbar vertical before={0} thumb={550} after={98} />
    </div>
  </aside>
);

const App: FC = (): ReactNode => {
  return (
    <div className="relative flex h-screen flex-col overflow-hidden border-t border-l border-[#696969] bg-[#f0f0f0] font-[Roboto,Tahoma,sans-serif] text-[11px] leading-[15px] text-black">
      <div className="grid shrink-0 grid-cols-[239fr_239fr_239fr_431fr] gap-[7px] pt-[5px] pr-[9px] pb-[9px] pl-[5px]">
        <Picker id="system" label="Active WDM System" value="Initial" />
        <Picker id="rule" label="Active Span Engineering Rule" value="32ch-100GHz_FixedOADM_WSS" />
        <Picker id="assignment" label="Active Channel Assignment" value="AnchorWavelength_32_sol_2" />
        <Picker id="line" label="Active Transmission Line" value="Level 1">
          <button type="button" disabled className="h-5 w-[49px] border border-[#bfbfbf] bg-[#cccccc] text-[#838383]">
            Add
          </button>
          <button type="button" disabled className="h-5 w-[49px] border border-[#bfbfbf] bg-[#cccccc] text-[#838383]">
            Del
          </button>
        </Picker>
      </div>

      <div className="flex min-h-0 flex-1">
        <main className="flex min-w-0 flex-1 flex-col">
          <div className="flex h-[216px] shrink-0">
            <div className="min-w-0 flex-1 overflow-hidden border-r border-b border-white pt-5 pl-2.5">
              <NetworkDiagram />
            </div>
            <Scrollbar vertical before={40} thumb={100} after={42} />
          </div>
          <div className="mr-4 shrink-0">
            <Scrollbar before={201} thumb={412} after={176} />
          </div>
          <div className="mt-[3px] mb-0.5 h-[9px] shrink-0 border-t border-r border-b border-t-white border-r-[#696969] border-b-[#696969]" />

          <div className="flex min-h-0 flex-1">
            <div className="mr-px flex min-w-0 flex-1 flex-col gap-px overflow-hidden bg-white">
              <ChartPanel title="Signal power - all channels">
                <Chart
                  title="Power (dBm)"
                  titleX={67}
                  iterationX={161}
                  zero={61.5}
                  gridTop={25}
                  ticks={powerTicks}
                  series={powerSeries}
                  limits={powerLimits}
                >
                  <ellipse cx="257" cy="105.500" rx="16.500" ry="52" fill="none" stroke="#e8202a" />
                </Chart>
              </ChartPanel>
              <ChartPanel title="Dispersion - all channels" zoomed>
                <Chart
                  title="Dispersion (e3 ps/nm)"
                  titleX={44}
                  iterationX={185}
                  zero={102.5}
                  gridTop={25}
                  ticks={dispersionTicks}
                  series={dispersionSeries}
                  limits={dispersionLimits}
                />
              </ChartPanel>
              <ChartPanel title="Signal-to-noise ratio - all channels" collapsed />
            </div>
            <Scrollbar vertical before={0} thumb={416} after={1} />
          </div>
          <div className="mr-4 mb-1.5 shrink-0">
            <Scrollbar before={201} thumb={412} after={176} />
          </div>
        </main>
        <DesignAssistant />
      </div>

      <Tooltip />
      <svg width="13" height="20" viewBox="0 0 13 20" className="pointer-events-none absolute top-[151px] left-[248px] z-20">
        <path d="M1 1V16L4.500 12.500L7 18.500L9.500 17.500L7 11.500H12Z" fill="#fff" stroke="#000" />
      </svg>
    </div>
  );
};
export default App;
